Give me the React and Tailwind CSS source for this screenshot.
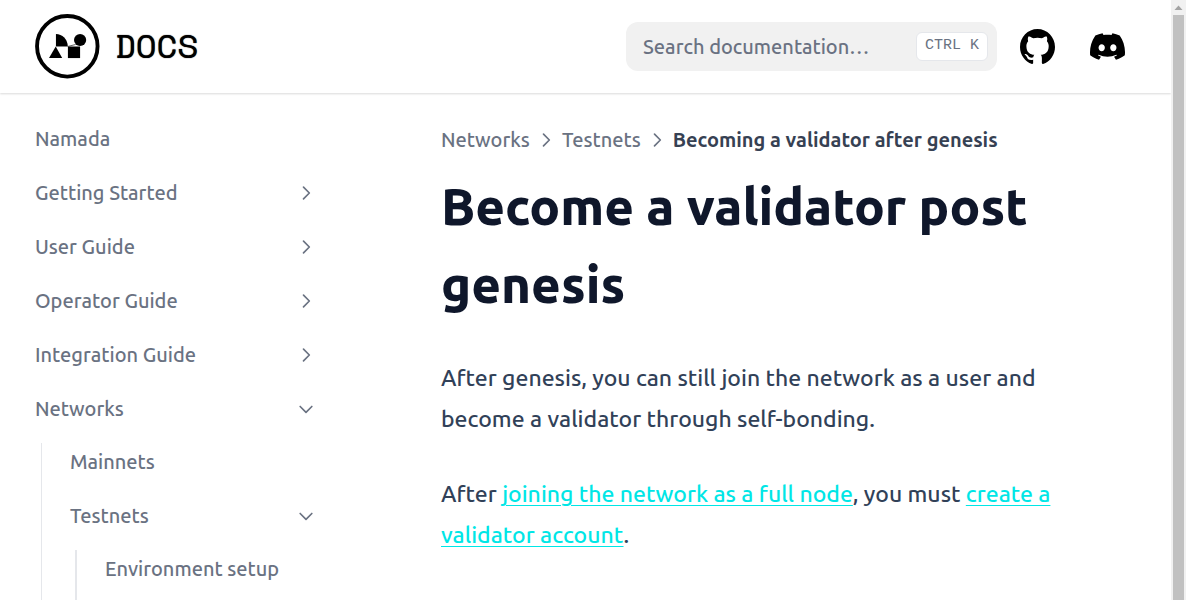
const NAV = [
  { label: 'Namada' },
  { label: 'Getting Started', items: [] },
  { label: 'User Guide', items: [] },
  { label: 'Operator Guide', items: [] },
  { label: 'Integration Guide', items: [] },
  {
    label: 'Networks',
    open: true,
    items: [
      { label: 'Mainnets' },
      { label: 'Testnets', open: true, items: [{ label: 'Environment setup' }] },
    ],
  },
];

function Chevron({ open }) {
  return (
    <svg
      viewBox="0 0 24 24"
      fill="none"
      stroke="currentColor"
      strokeWidth="2"
      strokeLinecap="round"
      strokeLinejoin="round"
      aria-hidden="true"
      className={open ? 'size-5 shrink-0 rotate-90' : 'size-5 shrink-0'}
    >
      <path d="M9 5l7 7-7 7" />
    </svg>
  );
}

function Logo() {
  return (
    <svg viewBox="0 0 64 64" className="size-[65px] shrink-0" aria-hidden="true">
      <circle cx="31.8" cy="31.8" r="29.8" fill="none" stroke="#000" strokeWidth="3.8" />
      <path d="M20.6 19.6A11.6 12 0 0 1 32.2 31.6H20.6Z" />
      <circle cx="44.4" cy="25.6" r="6" />
      <path d="M20.4 32L26.8 43.4H13.8Z" />
      <path d="M32.4 32H44.4V43.4H32.4Z" />
      <path d="M20.6 31.8H33L40 30" fill="none" stroke="#000" strokeWidth="0.6" />
    </svg>
  );
}

function GithubIcon() {
  return (
    <svg viewBox="3 3 18 18" fill="currentColor" aria-hidden="true" className="size-[35px]">
      <path d="M12 3C7.0275 3 3 7.12937 3 12.2276C3 16.3109 5.57625 19.7597 9.15374 20.9824C9.60374 21.0631 9.77249 20.7863 9.77249 20.5441C9.77249 20.3249 9.76125 19.5982 9.76125 18.8254C7.5 19.2522 6.915 18.2602 6.735 17.7412C6.63375 17.4759 6.19499 16.6569 5.8125 16.4378C5.4975 16.2647 5.0475 15.838 5.80124 15.8264C6.51 15.8149 7.01625 16.4954 7.18499 16.7723C7.99499 18.1679 9.28875 17.7758 9.80625 17.5335C9.885 16.9337 10.1212 16.53 10.38 16.2993C8.3775 16.0687 6.285 15.2728 6.285 11.7432C6.285 10.7397 6.63375 9.9092 7.20749 9.26326C7.1175 9.03257 6.8025 8.08674 7.2975 6.81794C7.2975 6.81794 8.05125 6.57571 9.77249 7.76377C10.4925 7.55615 11.2575 7.45234 12.0225 7.45234C12.7875 7.45234 13.5525 7.55615 14.2725 7.76377C15.9937 6.56418 16.7475 6.81794 16.7475 6.81794C17.2424 8.08674 16.9275 9.03257 16.8375 9.26326C17.4113 9.9092 17.76 10.7281 17.76 11.7432C17.76 15.2843 15.6563 16.0687 13.6537 16.2993C13.98 16.5877 14.2613 17.1414 14.2613 18.0065C14.2613 19.2407 14.25 20.2326 14.25 20.5441C14.25 20.7863 14.4188 21.0746 14.8688 20.9824C16.6554 20.364 18.2079 19.1866 19.3078 17.6162C20.4077 16.0457 20.9995 14.1611 21 12.2276C21 7.12937 16.9725 3 12 3Z" />
    </svg>
  );
}

function DiscordIcon() {
  return (
    <svg viewBox="0 5 30.67 23.25" fill="currentColor" aria-hidden="true" className="size-[35px]">
      <path d="M26.0015 6.9529C24.0021 6.03845 21.8787 5.37198 19.6623 5C19.3833 5.48048 19.0733 6.13144 18.8563 6.64292C16.4989 6.30193 14.1585 6.30193 11.8336 6.64292C11.6166 6.13144 11.2911 5.48048 11.0276 5C8.79575 5.37198 6.67235 6.03845 4.6869 6.9529C0.672601 12.8736 -0.41235 18.6548 0.130124 24.3585C2.79599 26.2959 5.36889 27.4739 7.89682 28.2489C8.51679 27.4119 9.07477 26.5129 9.55525 25.5675C8.64079 25.2265 7.77283 24.808 6.93587 24.312C7.15286 24.1571 7.36986 23.9866 7.57135 23.8161C12.6241 26.1255 18.0969 26.1255 23.0876 23.8161C23.3046 23.9866 23.5061 24.1571 23.7231 24.312C22.8861 24.808 22.0182 25.2265 21.1037 25.5675C21.5842 26.5129 22.1422 27.4119 22.7621 28.2489C25.2885 27.4739 27.8769 26.2959 30.5288 24.3585C31.1952 17.7559 29.4733 12.0212 26.0015 6.9529ZM10.2527 20.8402C8.73376 20.8402 7.49382 19.4608 7.49382 17.7714C7.49382 16.082 8.70276 14.7025 10.2527 14.7025C11.7871 14.7025 13.0425 16.082 13.0115 17.7714C13.0115 19.4608 11.7871 20.8402 10.2527 20.8402ZM20.4373 20.8402C18.9183 20.8402 17.6768 19.4608 17.6768 17.7714C17.6768 16.082 18.8873 14.7025 20.4373 14.7025C21.9717 14.7025 23.2271 16.082 23.1961 17.7714C23.1961 19.4608 21.9872 20.8402 20.4373 20.8402Z" />
    </svg>
  );
}

function Header() {
  return (
    <header className="z-10 flex h-[93px] shrink-0 items-center bg-white pr-[46px] pl-[35px] shadow-[0_1px_2px_rgba(0,0,0,0.15)]">
      <a href="#home" className="mr-auto flex items-center gap-[15px] text-black">
        <Logo />
        <span className="pb-1 font-['Space_Mono','Liberation_Mono',monospace] text-[34px] leading-none font-normal [text-shadow:0_0_1px_black]">
          DOCS
        </span>
      </a>
      <div className="flex h-[49px] w-[371px] items-center rounded-xl bg-[#f1f1f1] pr-[9px] pl-[17px]">
        <input
          type="search"
          aria-label="Search documentation"
          placeholder="Search documentation…"
          className="min-w-0 flex-1 bg-transparent text-xl outline-none placeholder:text-gray-500"
        />
        <kbd className="flex h-[29px] items-center rounded-md border border-gray-200 bg-white px-2 font-['Liberation_Mono',monospace] text-[15px] font-normal text-gray-500">
          CTRL K
        </kbd>
      </div>
      <a href="#github" aria-label="GitHub" className="ml-[23px] text-black">
        <GithubIcon />
      </a>
      <a href="#discord" aria-label="Discord" className="ml-[35px] text-black">
        <DiscordIcon />
      </a>
    </header>
  );
}

function NavItem({ item, depth }) {
  const row = 'flex h-[38px] w-full items-center justify-between text-left';
  return (
    <li>
      {item.items ? (
        <button type="button" aria-expanded={Boolean(item.open)} className={row}>
          {item.label}
          <Chevron open={item.open} />
        </button>
      ) : (
        <a href="#page" className={row}>
          {item.label}
        </a>
      )}
      {item.open && (
        <div className={depth === 0 ? 'pt-[15px] pl-1.5' : 'pt-[15px] pl-[5px]'}>
          <ul
            className={
              depth === 0
                ? 'flex flex-col gap-4 border-l border-gray-200 pl-7'
                : 'flex flex-col gap-4 border-l-2 border-gray-200 pb-4 pl-7'
            }
          >
            {item.items.map((child) => (
              <NavItem key={child.label} item={child} depth={depth + 1} />
            ))}
          </ul>
        </div>
      )}
    </li>
  );
}

function Sidebar() {
  return (
    <nav aria-label="Docs" className="w-[350px] shrink-0 pt-[27px] pr-[34px] pl-[35px] text-xl text-gray-500">
      <ul className="flex flex-col gap-4">
        {NAV.map((item) => (
          <NavItem key={item.label} item={item} depth={0} />
        ))}
      </ul>
    </nav>
  );
}

function TextLink({ children }) {
  return (
    <a href="#link" className="text-[#00e6e6] underline decoration-1 underline-offset-3">
      {children}
    </a>
  );
}

function Article() {
  return (
    <main className="min-w-0 flex-1 px-[91px] pt-[33px] text-[23px] leading-[41px] text-slate-700">
      <nav aria-label="Breadcrumb" className="flex items-center gap-1.5 text-xl leading-7 whitespace-nowrap text-gray-500">
        <a href="#networks">Networks</a>
        <Chevron />
        <a href="#testnets">Testnets</a>
        <Chevron />
        <span aria-current="page" className="font-semibold text-gray-700">
          Becoming a validator after genesis
        </span>
      </nav>
      <h1 className="mt-[13px] text-[51px] leading-[78px] font-extrabold text-slate-900">Become a validator post genesis</h1>
      <p className="mt-[34px]">
        After genesis, you can still join the network as a user and become a validator through self-bonding.
      </p>
      <p className="mt-[34px]">
        After <TextLink>joining the network as a full node</TextLink>, you must{' '}
        <TextLink>create a validator account</TextLink>.
      </p>
    </main>
  );
}

function ScrollTrack() {
  return (
    <div aria-hidden="true" className="flex w-[15px] shrink-0 flex-col items-center bg-[#f1f1f1]">
      <svg viewBox="0 0 15 15" className="h-[15px] w-[15px] shrink-0" fill="#a3a3a3">
        <path d="M7.5 5.5L11.5 10H3.5Z" />
      </svg>
      <div className="w-[11px] flex-1 bg-[#c1c1c1]" />
    </div>
  );
}

export default function App() {
  return (
    <div className="flex h-screen overflow-hidden bg-white font-['Ubuntu','Open_Sans',sans-serif] font-medium">
      <div className="flex min-w-0 flex-1 flex-col overflow-hidden">
        <Header />
        <div className="flex min-h-0 flex-1 overflow-hidden">
          <Sidebar />
          <Article />
        </div>
      </div>
      <ScrollTrack />
    </div>
  );
}
